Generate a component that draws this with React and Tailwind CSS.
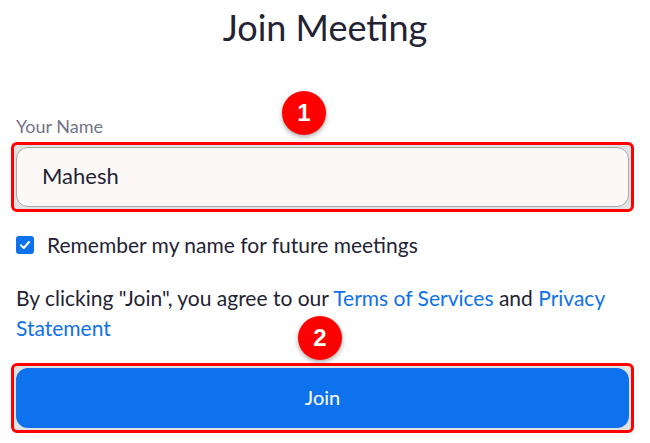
import React from "react";

const Badge = ({ num, className }) => (
    <div
        className={`absolute w-[44px] h-[44px] rounded-full bg-[#ff0000] flex items-center justify-center text-white text-[24px] font-bold shadow-[0_2px_5px_rgba(0,0,0,0.35)] ${className}`}
        style={{ fontFamily: '"Liberation Sans", Arial, sans-serif' }}
    >
        {num}
    </div>
);

const App = () => {
    return (
        <div
            className="relative w-[650px] h-[443px] bg-white overflow-hidden text-[#232333]"
            style={{ fontFamily: 'Lato, "Open Sans", sans-serif' }}
        >
            <h1 className="mt-[6px] text-center text-[36px] leading-[43px] font-normal">
                Join Meeting
            </h1>

            <div className="pl-[11px] pr-[16px]">
                <label className="block mt-[66px] pl-[5px] text-[18px] leading-[22px] text-[#747487]">
                    Your Name
                </label>

                <div className="mt-[5px] border-[3px] border-[#ff0000] rounded-[6px] p-[2px] bg-[#e2e2e2]">
                    <div className="h-[60px] flex items-center rounded-[12px] border border-[#a9a9ad] bg-[#fbf8f7] pl-[25px] pb-[4px] text-[22px]">
                        Mahesh
                    </div>
                </div>

                <div className="mt-[19px] pl-[5px] flex items-center gap-[13px]">
                    <div className="w-[18px] h-[18px] rounded-[3px] bg-[#0e72ed] flex items-center justify-center">
                        <svg width="12" height="12" viewBox="0 0 12 12" fill="none">
                            <path d="M2 6.3 L4.8 9 L10 3" stroke="white" strokeWidth="2" strokeLinecap="round" strokeLinejoin="round" />
                        </svg>
                    </div>
                    <span className="text-[21px] leading-[28px]">Remember my name for future meetings</span>
                </div>

                <p className="mt-[24px] pl-[5px] text-[21px] leading-[30px]">
                    By clicking "Join", you agree to our <span className="text-[#0e71eb]">Terms of Services</span> and <span className="text-[#0e71eb]">Privacy Statement</span>
                </p>

                <div className="mt-[20px] border-[3px] border-[#ff0000] rounded-[6px] p-[2px] bg-[#e2e2e2]">
                    <button className="w-full h-[60px] rounded-[12px] bg-[#0e72ed] text-white text-[20px] pb-[2px]">
                        Join
                    </button>
                </div>
            </div>

            <Badge num="1" className="left-[282px] top-[91px]" />
            <Badge num="2" className="left-[298px] top-[316px]" />
        </div>
    );
};

export default App;
